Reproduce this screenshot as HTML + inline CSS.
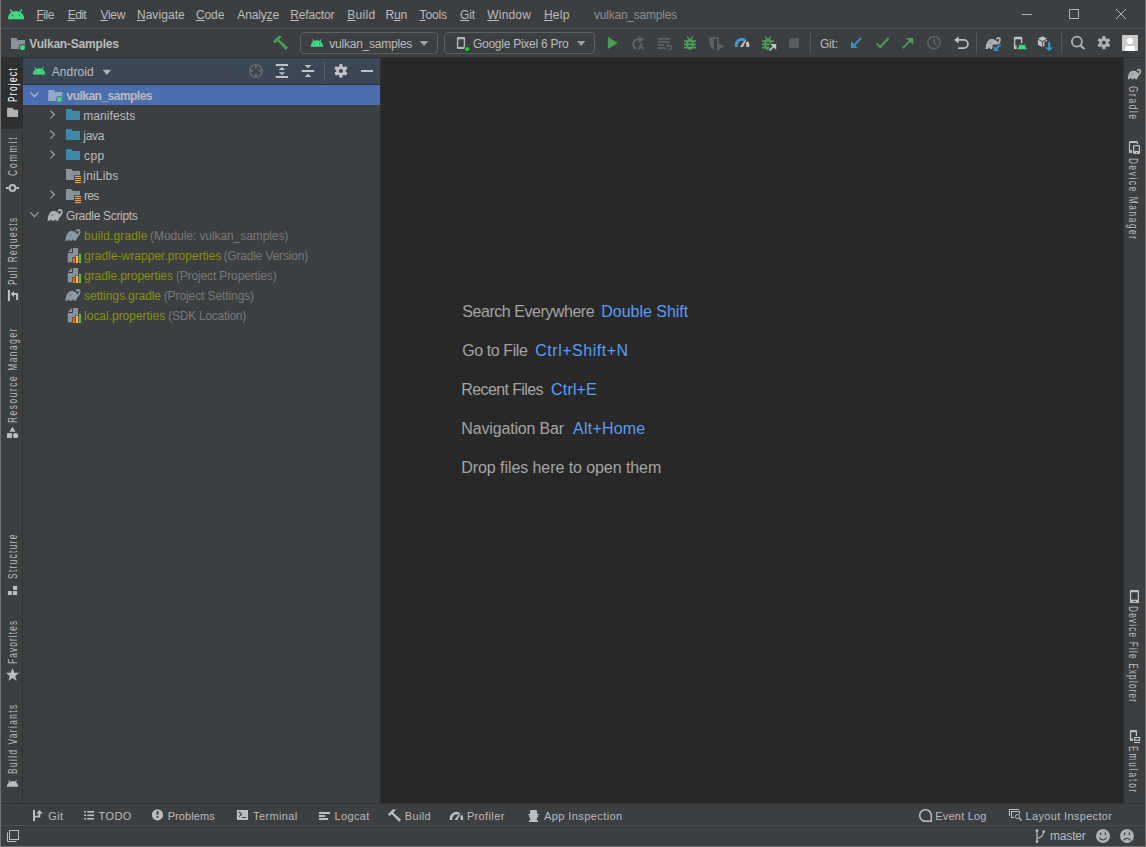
<!DOCTYPE html>
<html lang="en"><head><meta charset="utf-8"><title>vulkan_samples - Android Studio</title>
<style>html,body{margin:0;padding:0;background:#3c3f41;}
body{width:1146px;height:847px;overflow:hidden;position:relative;font-family:"Liberation Sans",sans-serif;font-size:12px;color:#bbbbbb;}
.r{position:absolute;}
.t{position:absolute;white-space:nowrap;line-height:16px;font-size:12px;}
.e{line-height:22px;font-size:16px;}
.s{font-size:11px;}
.vl{transform-origin:0 0;transform:rotate(-90deg) scaleX(0.69);font-size:12px;}
.vr{transform-origin:0 0;transform:rotate(90deg) scaleX(0.69);font-size:12px;}
u{text-decoration:underline;text-underline-offset:1px;text-decoration-thickness:1px;}
svg{position:absolute;left:0;top:0;}
</style></head><body>
<!-- frame regions -->
<div class="r" style="left:0px;top:28px;width:1146px;height:1px;background:#515151;"></div>
<div class="r" style="left:0px;top:57px;width:1146px;height:1px;background:#323232;"></div>
<div class="r" style="left:381px;top:58px;width:742px;height:745px;background:#282828;"></div>
<div class="r" style="left:1123px;top:58px;width:1px;height:745px;background:#323232;"></div>
<div class="r" style="left:380px;top:58px;width:1px;height:745px;background:#323232;"></div>
<div class="r" style="left:23px;top:58px;width:357px;height:26px;background:#3b4754;"></div>
<div class="r" style="left:23px;top:84px;width:357px;height:1px;background:#2f3234;"></div>
<div class="r" style="left:23px;top:85px;width:357px;height:20px;background:#4b6eaf;"></div>
<div class="r" style="left:1px;top:58px;width:22px;height:71px;background:#2d2f30;"></div>
<div class="r" style="left:22px;top:129px;width:1px;height:674px;background:#323232;"></div>
<div class="r" style="left:0px;top:803px;width:1146px;height:1px;background:#323232;"></div>
<div class="r" style="left:0px;top:825px;width:1146px;height:1px;background:#4b4d4f;"></div>
<div class="r" style="left:0px;top:0px;width:1px;height:847px;background:#737373;"></div>
<div class="r" style="left:1145px;top:0px;width:1px;height:847px;background:#6f6f6f;"></div>
<div class="r" style="left:0px;top:846px;width:1146px;height:1px;background:#6f6f6f;"></div>
<div class="r" style="left:300px;top:32px;width:136px;height:20px;border:1px solid #5e6060;border-radius:4px;"></div>
<div class="r" style="left:444px;top:32px;width:149px;height:20px;border:1px solid #5e6060;border-radius:4px;"></div>
<!-- text -->
<span id="m_file" class="t" style="left:36.50px;top:6.84px;letter-spacing:-0.471px;"><u>F</u>ile</span>
<span id="m_edit" class="t" style="left:67.70px;top:6.84px;letter-spacing:-0.564px;"><u>E</u>dit</span>
<span id="m_view" class="t" style="left:100.50px;top:6.84px;letter-spacing:-0.297px;"><u>V</u>iew</span>
<span id="m_nav" class="t" style="left:136.90px;top:6.84px;letter-spacing:0.068px;"><u>N</u>avigate</span>
<span id="m_code" class="t" style="left:195.90px;top:6.84px;letter-spacing:-0.071px;"><u>C</u>ode</span>
<span id="m_ana" class="t" style="left:237.30px;top:6.84px;letter-spacing:-0.152px;">Analy<u>z</u>e</span>
<span id="m_ref" class="t" style="left:290.30px;top:6.84px;letter-spacing:-0.176px;"><u>R</u>efactor</span>
<span id="m_build" class="t" style="left:347.30px;top:6.84px;letter-spacing:0.300px;"><u>B</u>uild</span>
<span id="m_run" class="t" style="left:385.50px;top:6.84px;letter-spacing:-0.200px;">R<u>u</u>n</span>
<span id="m_tools" class="t" style="left:419.50px;top:6.84px;letter-spacing:-0.125px;"><u>T</u>ools</span>
<span id="m_git" class="t" style="left:460.10px;top:6.84px;letter-spacing:-0.150px;"><u>G</u>it</span>
<span id="m_win" class="t" style="left:487.30px;top:6.84px;letter-spacing:0.180px;"><u>W</u>indow</span>
<span id="m_help" class="t" style="left:543.90px;top:6.84px;letter-spacing:0.300px;"><u>H</u>elp</span>
<span id="title" class="t" style="left:594.10px;top:6.84px;letter-spacing:-0.235px;color:#8e8e8e;">vulkan_samples</span>
<span id="crumb" class="t" style="left:29.30px;top:35.84px;letter-spacing:-0.199px;font-weight:bold;">Vulkan-Samples</span>
<span id="cb1" class="t" style="left:329.30px;top:35.84px;letter-spacing:-0.231px;">vulkan_samples</span>
<span id="cb2" class="t" style="left:472.90px;top:35.84px;letter-spacing:-0.250px;">Google Pixel 6 Pro</span>
<span id="gitlbl" class="t" style="left:819.90px;top:35.84px;letter-spacing:-0.169px;">Git:</span>
<span id="ph" class="t" style="left:51.70px;top:63.84px;letter-spacing:0.123px;">Android</span>
<span id="t0" class="t" style="left:66.50px;top:87.84px;letter-spacing:-0.517px;font-weight:bold;">vulkan_samples</span>
<span id="t1" class="t" style="left:83.30px;top:107.84px;letter-spacing:0.078px;">manifests</span>
<span id="t2" class="t" style="left:83.30px;top:127.84px;letter-spacing:-0.293px;">java</span>
<span id="t3" class="t" style="left:83.90px;top:147.84px;letter-spacing:0.500px;">cpp</span>
<span id="t4" class="t" style="left:83.30px;top:167.84px;letter-spacing:0.164px;">jniLibs</span>
<span id="t5" class="t" style="left:84.10px;top:187.84px;letter-spacing:-0.750px;">res</span>
<span id="t6" class="t" style="left:65.90px;top:207.84px;letter-spacing:-0.315px;">Gradle Scripts</span>
<span id="t7a" class="t" style="left:84.10px;top:227.84px;letter-spacing:0.119px;color:#88900c;">build.gradle</span>
<span id="t7b" class="t" style="left:150.10px;top:227.84px;letter-spacing:-0.079px;color:#787878;">(Module: vulkan_samples)</span>
<span id="t8a" class="t" style="left:84.10px;top:247.84px;letter-spacing:0.024px;color:#88900c;">gradle-wrapper.properties</span>
<span id="t8b" class="t" style="left:223.50px;top:247.84px;letter-spacing:-0.174px;color:#787878;">(Gradle Version)</span>
<span id="t9a" class="t" style="left:84.10px;top:267.84px;letter-spacing:-0.074px;color:#88900c;">gradle.properties</span>
<span id="t9b" class="t" style="left:175.90px;top:267.84px;letter-spacing:-0.134px;color:#787878;">(Project Properties)</span>
<span id="t10a" class="t" style="left:84.10px;top:287.84px;letter-spacing:-0.080px;color:#88900c;">settings.gradle</span>
<span id="t10b" class="t" style="left:163.70px;top:287.84px;letter-spacing:-0.095px;color:#787878;">(Project Settings)</span>
<span id="t11a" class="t" style="left:84.10px;top:307.84px;letter-spacing:-0.021px;color:#88900c;">local.properties</span>
<span id="t11b" class="t" style="left:168.30px;top:307.84px;letter-spacing:-0.267px;color:#787878;">(SDK Location)</span>
<span id="e1a" class="t e" style="left:462.30px;top:301.46px;letter-spacing:-0.458px;color:#a4a4a4;">Search Everywhere</span>
<span id="e1b" class="t e" style="left:601.30px;top:301.46px;letter-spacing:-0.030px;color:#589df6;">Double Shift</span>
<span id="e2a" class="t e" style="left:462.30px;top:340.46px;letter-spacing:-0.429px;color:#a4a4a4;">Go to File</span>
<span id="e2b" class="t e" style="left:535.30px;top:340.46px;letter-spacing:0.516px;color:#589df6;">Ctrl+Shift+N</span>
<span id="e3a" class="t e" style="left:461.30px;top:379.46px;letter-spacing:-0.610px;color:#a4a4a4;">Recent Files</span>
<span id="e3b" class="t e" style="left:551.10px;top:379.46px;letter-spacing:0.160px;color:#589df6;">Ctrl+E</span>
<span id="e4a" class="t e" style="left:461.30px;top:418.46px;letter-spacing:-0.159px;color:#a4a4a4;">Navigation Bar</span>
<span id="e4b" class="t e" style="left:573.10px;top:418.46px;letter-spacing:0.210px;color:#589df6;">Alt+Home</span>
<span id="e5a" class="t e" style="left:461.30px;top:457.46px;letter-spacing:-0.072px;color:#a4a4a4;">Drop files here to open them</span>
<span id="b_git" class="t s" style="left:48.30px;top:808.19px;letter-spacing:0.300px;">Git</span>
<span id="b_todo" class="t s" style="left:98.50px;top:808.19px;letter-spacing:0.405px;">TODO</span>
<span id="b_prob" class="t s" style="left:167.70px;top:808.19px;letter-spacing:0.091px;">Problems</span>
<span id="b_term" class="t s" style="left:253.10px;top:808.19px;letter-spacing:0.355px;">Terminal</span>
<span id="b_log" class="t s" style="left:334.50px;top:808.19px;letter-spacing:0.380px;">Logcat</span>
<span id="b_build" class="t s" style="left:404.70px;top:808.19px;letter-spacing:0.375px;">Build</span>
<span id="b_prof" class="t s" style="left:466.90px;top:808.19px;letter-spacing:0.367px;">Profiler</span>
<span id="b_app" class="t s" style="left:543.90px;top:808.19px;letter-spacing:0.426px;">App Inspection</span>
<span id="b_ev" class="t s" style="left:935.30px;top:808.19px;letter-spacing:0.204px;">Event Log</span>
<span id="b_li" class="t s" style="left:1025.50px;top:808.19px;letter-spacing:0.342px;">Layout Inspector</span>
<span id="s_master" class="t" style="left:1049.90px;top:827.84px;letter-spacing:-0.140px;">master</span>
<span id="l_proj" class="t vl" style="left:5.04px;top:102.30px;letter-spacing:1.881px;color:#ffffff;">Project</span>
<span id="l_commit" class="t vl" style="left:5.04px;top:176.30px;letter-spacing:2.928px;">Commit</span>
<span id="l_pr" class="t vl" style="left:5.04px;top:285.30px;letter-spacing:1.933px;">Pull Requests</span>
<span id="l_rm" class="t vl" style="left:5.04px;top:422.50px;letter-spacing:2.319px;">Resource Manager</span>
<span id="l_struct" class="t vl" style="left:5.04px;top:579.10px;letter-spacing:1.960px;">Structure</span>
<span id="l_fav" class="t vl" style="left:5.04px;top:663.70px;letter-spacing:1.630px;">Favorites</span>
<span id="l_bv" class="t vl" style="left:5.04px;top:774.30px;letter-spacing:2.093px;">Build Variants</span>
<span id="r_gradle" class="t vr" style="left:1141.16px;top:86.10px;letter-spacing:2.406px;">Gradle</span>
<span id="r_dm" class="t vr" style="left:1141.16px;top:158.10px;letter-spacing:2.316px;">Device Manager</span>
<span id="r_dfe" class="t vr" style="left:1141.16px;top:606.10px;letter-spacing:1.678px;">Device File Explorer</span>
<span id="r_emu" class="t vr" style="left:1141.16px;top:746.30px;letter-spacing:2.779px;">Emulator</span>
<!-- icons -->
<svg width="1146" height="847" viewBox="0 0 1146 847">
<g transform="translate(7.90,9.40) scale(1.0062)"><path d="M0,9.8 A8.1,8.3 0 0 1 16.2,9.8 Z" fill="#3ddc84"/><path d="M2.7,0.5 L4.6,3.6 M13.5,0.5 L11.6,3.6" stroke="#3ddc84" stroke-width="1.3" stroke-linecap="round" fill="none"/><circle cx="4.6" cy="6.1" r="0.7" fill="#3c3f41"/><circle cx="11.6" cy="6.1" r="0.7" fill="#3c3f41"/></g>
<path d="M1022,14.5 L1032,14.5" stroke="#b0b2b4" stroke-width="1" stroke-linecap="butt" fill="none"/>
<rect x="1069.5" y="9.5" width="9" height="9" fill="none" stroke="#b0b2b4" stroke-width="1"/>
<path d="M1116,9 L1126,19 M1126,9 L1116,19" fill="none" stroke="#b0b2b4" stroke-width="1" stroke-linecap="butt" stroke-linejoin="miter"/>
<path d="M11,38 h5.2 l1.8,2 h7 v9 h-14 Z" fill="#87939a"/>
<circle cx="22.5" cy="47.5" r="3.5" fill="#3c3f41"/><circle cx="22.5" cy="47.5" r="2.6" fill="#3ddc84"/>
<polygon points="272.90,41.50 278.40,35.90 282.20,36.00 279.20,39.50 288.10,47.50 285.70,50.00 277.40,41.10 275.30,43.40" fill="#499c54"/>
<g transform="translate(310.60,39.20) scale(0.7778)"><path d="M0,9.8 A8.1,8.3 0 0 1 16.2,9.8 Z" fill="#3ddc84"/><path d="M2.7,0.5 L4.6,3.6 M13.5,0.5 L11.6,3.6" stroke="#3ddc84" stroke-width="1.3" stroke-linecap="round" fill="none"/><circle cx="4.6" cy="6.1" r="0.7" fill="#3c3f41"/><circle cx="11.6" cy="6.1" r="0.7" fill="#3c3f41"/></g>
<polygon points="419.7,41 428.4,41 424.05,46" fill="#9da0a2"/>
<rect x="456.9" y="37" width="8.2" height="12" fill="#a9b7c4" rx="1.2" />
<rect x="458.3" y="39.3" width="5.4" height="7.6" fill="#3c3f41" />
<circle cx="467.1" cy="49.1" r="2.8" fill="#3c3f41"/><circle cx="467.1" cy="49.1" r="2.1" fill="#00e400"/>
<polygon points="577,41 585.4,41 581.2,46" fill="#9da0a2"/>
<polygon points="607.9,36.8 607.9,49 617.7,42.9" fill="#499c54"/>
<path d="M639.2,39.7 A4,4 0 1 0 636.4,48.7" fill="none" stroke="#5f6163" stroke-width="2" stroke-linecap="butt" stroke-linejoin="miter"/>
<polygon points="638.6,36 643.9,39.7 638.6,43" fill="#5f6163"/>
<path d="M638.5,49.8 L641.05,44.3 L643.6,49.8 M639.5,48 H642.6" fill="none" stroke="#5f6163" stroke-width="1.5" stroke-linecap="butt" stroke-linejoin="miter"/>
<rect x="658" y="38.1" width="11.9" height="1.7" fill="#5f6163" />
<rect x="658" y="41.2" width="11.9" height="1.7" fill="#5f6163" />
<rect x="658" y="44.2" width="6" height="1.7" fill="#5f6163" />
<rect x="658" y="47.2" width="7.9" height="1.7" fill="#5f6163" />
<path d="M667.6,45.6 H669.6 A2,2 0 0 1 669.6,49.6 H668.6" fill="none" stroke="#5f6163" stroke-width="1.1" stroke-linecap="butt" stroke-linejoin="miter"/>
<polygon points="666,45.6 668.4,43.8 668.4,47.4" fill="#5f6163"/>
<g fill="#499c54" stroke="#499c54">
<ellipse cx="690" cy="44.3" rx="4" ry="5.7" stroke="none"/>
<path d="M687.1,36.3 L689,39.2 M692.9,36.3 L691,39.2" stroke-width="1.3" fill="none"/>
<path d="M684,41.1 H696" stroke-width="1.7" fill="none"/>
<path d="M684,44.4 H696" stroke-width="1.7" fill="none"/>
<path d="M684,47.6 H696" stroke-width="1.7" fill="none"/>
</g>
<path d="M688.3,42.6 H691.7 M688.3,45.9 H691.7" stroke="#3c3f41" stroke-width="1.1" fill="none"/>
<path d="M709.2,37.6 L714,36.8 L718.7,37.6 V42.5 H717 V39 L714,38.4 V49 C711,47.5 709.2,45 709.2,42 Z" fill="#5f6163"/>
<polygon points="717,42 717,50.8 723.9,46.4" fill="#5f6163"/>
<clipPath id="cg1"><rect x="733.7" y="36.900000000000006" width="16.6" height="10.00"/></clipPath><g clip-path="url(#cg1)">
<path d="M736.55,47.18 A5.80,5.80 0 0 1 744.54,39.99" stroke="#3a9bd5" stroke-width="3.00" fill="none"/>
<path d="M746.86,42.04 A5.80,5.80 0 0 1 747.45,47.18" stroke="#c4c6c8" stroke-width="3.00" fill="none"/>
<polygon points="739.90,46.90 742.90,46.90 746.38,39.82 745.58,39.22" fill="#c4c6c8"/>
</g>
<clipPath id="cpb"><path d="M760,34 H777 V43.2 H769.2 V52 H760 Z"/></clipPath><g clip-path="url(#cpb)">
<g fill="#499c54" stroke="#499c54">
<ellipse cx="768" cy="44.3" rx="4" ry="5.7" stroke="none"/>
<path d="M765.1,36.3 L767,39.2 M770.9,36.3 L769,39.2" stroke-width="1.3" fill="none"/>
<path d="M762,41.1 H774" stroke-width="1.7" fill="none"/>
<path d="M762,44.4 H774" stroke-width="1.7" fill="none"/>
<path d="M762,47.6 H774" stroke-width="1.7" fill="none"/>
</g>
<path d="M766.3,42.6 H769.7 M766.3,45.9 H769.7" stroke="#3c3f41" stroke-width="1.1" fill="none"/>
</g>
<polygon points="770.4,43.9 776.2,43.9 776.2,49.8" fill="#c0c2c4"/>
<path d="M769.6,50.3 L774.2,45.8" stroke="#c0c2c4" stroke-width="1.8" stroke-linecap="butt" fill="none"/>
<rect x="789.1" y="38.1" width="9.8" height="9.8" fill="#5a5c5e" />
<rect x="810" y="33" width="1" height="20" fill="#55585a" />
<rect x="976" y="33" width="1" height="20" fill="#55585a" />
<rect x="1061" y="33" width="1" height="20" fill="#55585a" />
<path d="M861.2,37.9 L854.5,44.9" stroke="#3592c4" stroke-width="1.8" stroke-linecap="butt" fill="none"/>
<polygon points="851,41.1 851,48 857.9,48" fill="#3592c4"/>
<path d="M876.6,43.4 L880.3,47 L888.6,38.2" fill="none" stroke="#499c54" stroke-width="2" stroke-linecap="butt" stroke-linejoin="miter"/>
<path d="M902.6,48.2 L910.2,40.6" stroke="#499c54" stroke-width="1.8" stroke-linecap="butt" fill="none"/>
<polygon points="906,38 913.2,38 913.2,45" fill="#499c54"/>
<circle cx="934" cy="42.6" r="6.1" fill="none" stroke="#5f6163" stroke-width="1.6"/>
<path d="M934,38.8 V42.8 L936.7,44.6" fill="none" stroke="#5f6163" stroke-width="1.5" stroke-linecap="butt" stroke-linejoin="miter"/>
<path d="M957.5,39.9 H963.8 A4.1,4.1 0 0 1 963.8,48.1 H958.2" fill="none" stroke="#c0c2c4" stroke-width="1.7" stroke-linecap="butt" stroke-linejoin="miter"/>
<polygon points="954.2,39.9 958.6,36.3 958.6,43.6" fill="#c0c2c4"/>
<g transform="translate(985.60,37.10) scale(1.0066)"><path d="M0.1,11.7 C0.2,9 0.5,7 1.1,5.9 C1.8,4.6 2.6,3.5 3.5,2.7 C4.2,2.2 4.8,2 5.5,2 C6.5,2 7.2,2.1 7.9,2.2 C8.8,2.4 9.4,2.7 10,3.1 C10.8,3.5 11.3,4 11.8,4.6 L12.8,6.6 L11.3,9.6 L10.6,11.7 H8.3 a0.85,1.25 0 0 0 -1.7,0 H4.1 a0.85,1.25 0 0 0 -1.7,0 Z" fill="#afb1b3"/><path d="M11.4,7.6 C12.9,6.4 14.2,4.6 14.25,3 C14.3,1.4 13.6,0.8 12.7,0.8 C12,0.8 11.5,1.1 11.2,1.5" stroke="#afb1b3" stroke-width="1.8" stroke-linecap="round" fill="none"/><path d="M3.5,5.9 C4.3,6.6 5.6,6.2 6.3,5.1" stroke="#3c3f41" stroke-width="0.7" fill="none" opacity="0.75"/></g>
<rect x="992.6" y="44.6" width="9" height="7" fill="#3c3f41" />
<polygon points="993.8,45.7 993.8,50.9 999.4,50.9" fill="#3592c4"/>
<path d="M995.8,49 L1000.6,44.8" stroke="#3592c4" stroke-width="1.7" stroke-linecap="butt" fill="none"/>
<rect x="1013.9" y="36.8" width="8.4" height="12.4" fill="#c0c2c4" rx="1.2" />
<rect x="1015.3" y="39.3" width="5.6" height="6.3" fill="#3c3f41" />
<path d="M1016.6,50.6 V46 C1018,43 1025.5,42 1027.4,46 V50.6 Z" fill="#3c3f41"/>
<g transform="translate(1017.70,44.00) scale(0.5432)"><path d="M0,9.8 A8.1,8.3 0 0 1 16.2,9.8 Z" fill="#3ddc84"/><path d="M2.7,0.5 L4.6,3.6 M13.5,0.5 L11.6,3.6" stroke="#3ddc84" stroke-width="1.3" stroke-linecap="round" fill="none"/></g>
<polygon points="1042.5,36.3 1047,38.8 1042.5,41.3 1037.9,38.8" fill="#c0c2c4"/>
<polygon points="1037.9,39.7 1042.1,42 1042.1,47 1037.9,44.7" fill="#c0c2c4"/>
<polygon points="1047,39.7 1042.9,42 1042.9,47 1047,44.7" fill="#c0c2c4"/>
<rect x="1044.4" y="41.5" width="9.4" height="10.2" fill="#3c3f41" />
<rect x="1048.2" y="42" width="2" height="6" fill="#3a9bd5" />
<polygon points="1045.2,47.4 1052.9,47.4 1049.2,51.1" fill="#3a9bd5"/>
<circle cx="1076.9" cy="41.7" r="5" fill="none" stroke="#afb1b3" stroke-width="1.8"/>
<path d="M1080.6,45.4 L1084.4,49" stroke="#afb1b3" stroke-width="2.1" stroke-linecap="butt" fill="none"/>
<g transform="translate(1103.9,42.7)"><circle r="4.62" fill="#afb1b3"/><rect x="-1.65" y="-6.60" width="3.30" height="3.96" rx="1.06" fill="#afb1b3" transform="rotate(0)"/><rect x="-1.65" y="-6.60" width="3.30" height="3.96" rx="1.06" fill="#afb1b3" transform="rotate(60)"/><rect x="-1.65" y="-6.60" width="3.30" height="3.96" rx="1.06" fill="#afb1b3" transform="rotate(120)"/><rect x="-1.65" y="-6.60" width="3.30" height="3.96" rx="1.06" fill="#afb1b3" transform="rotate(180)"/><rect x="-1.65" y="-6.60" width="3.30" height="3.96" rx="1.06" fill="#afb1b3" transform="rotate(240)"/><rect x="-1.65" y="-6.60" width="3.30" height="3.96" rx="1.06" fill="#afb1b3" transform="rotate(300)"/><circle r="1.91" fill="#3c3f41"/></g>
<rect x="1122" y="35" width="16" height="16" fill="#c9c9c9" />
<circle cx="1130" cy="40.9" r="3.1" fill="#fff"/><path d="M1125,51 V47.5 Q1125,46 1126.5,46 H1133.5 Q1135,46 1135,47.5 V51 Z" fill="#fff"/>
<g transform="translate(32.90,67.10) scale(0.7654)"><path d="M0,9.8 A8.1,8.3 0 0 1 16.2,9.8 Z" fill="#3ddc84"/><path d="M2.7,0.5 L4.6,3.6 M13.5,0.5 L11.6,3.6" stroke="#3ddc84" stroke-width="1.3" stroke-linecap="round" fill="none"/><circle cx="4.6" cy="6.1" r="0.7" fill="#3c3f41"/><circle cx="11.6" cy="6.1" r="0.7" fill="#3c3f41"/></g>
<polygon points="102.5,69.8 111.2,69.8 106.85,75" fill="#afb1b3"/>
<circle cx="255.9" cy="70.9" r="6.2" fill="none" stroke="#6b6a68" stroke-width="1.6"/>
<path d="M255.9,64.6 V68.4 M255.9,73.4 V77.2 M249.6,70.9 H253.4 M258.4,70.9 H262.2" fill="none" stroke="#6b6a68" stroke-width="1.6" stroke-linecap="butt" stroke-linejoin="miter"/>
<rect x="275.8" y="64" width="12.3" height="2" fill="#c0c2c4" />
<rect x="275.8" y="76" width="12.3" height="2" fill="#c0c2c4" />
<polygon points="282,67 285.3,70 278.7,70" fill="#c0c2c4"/>
<polygon points="278.7,72.2 285.3,72.2 282,75" fill="#c0c2c4"/>
<rect x="301.7" y="70" width="12.5" height="2" fill="#c0c2c4" />
<polygon points="304.7,65 311.3,65 308,68.3" fill="#c0c2c4"/>
<polygon points="308,73.8 311.3,77.1 304.7,77.1" fill="#c0c2c4"/>
<rect x="324" y="61" width="1" height="20" fill="#575c62" />
<g transform="translate(340.9,70.9)"><circle r="4.76" fill="#c0c2c4"/><rect x="-1.70" y="-6.80" width="3.40" height="4.08" rx="1.09" fill="#c0c2c4" transform="rotate(0)"/><rect x="-1.70" y="-6.80" width="3.40" height="4.08" rx="1.09" fill="#c0c2c4" transform="rotate(60)"/><rect x="-1.70" y="-6.80" width="3.40" height="4.08" rx="1.09" fill="#c0c2c4" transform="rotate(120)"/><rect x="-1.70" y="-6.80" width="3.40" height="4.08" rx="1.09" fill="#c0c2c4" transform="rotate(180)"/><rect x="-1.70" y="-6.80" width="3.40" height="4.08" rx="1.09" fill="#c0c2c4" transform="rotate(240)"/><rect x="-1.70" y="-6.80" width="3.40" height="4.08" rx="1.09" fill="#c0c2c4" transform="rotate(300)"/><circle r="1.97" fill="#3b4754"/></g>
<rect x="361" y="70" width="12" height="2" fill="#c0c2c4" />
<path d="M30.5,92.39999999999999 L34.5,96.6 L38.5,92.39999999999999" fill="none" stroke="#b5bfd3" stroke-width="1.2" stroke-linecap="butt" stroke-linejoin="miter"/>
<path d="M48.2,90 h5.2 l1.8,2 h7 v9 h-14 Z" fill="#9aa7c4"/>
<circle cx="59.3" cy="99.3" r="3.4" fill="#4b6eaf"/><circle cx="59.3" cy="99.3" r="2.5" fill="#3ddc84"/>
<path d="M50.199999999999996,110.6 L54.4,114.6 L50.199999999999996,118.6" fill="none" stroke="#a2a5a7" stroke-width="1.2" stroke-linecap="butt" stroke-linejoin="miter"/>
<path d="M66,109 h5.2 l1.8,2 h7 v9 h-14 Z" fill="#3f88a8"/>
<path d="M50.199999999999996,130.6 L54.4,134.6 L50.199999999999996,138.6" fill="none" stroke="#a2a5a7" stroke-width="1.2" stroke-linecap="butt" stroke-linejoin="miter"/>
<path d="M66,129 h5.2 l1.8,2 h7 v9 h-14 Z" fill="#3f88a8"/>
<path d="M50.199999999999996,150.6 L54.4,154.6 L50.199999999999996,158.6" fill="none" stroke="#a2a5a7" stroke-width="1.2" stroke-linecap="butt" stroke-linejoin="miter"/>
<path d="M66,149 h5.2 l1.8,2 h7 v9 h-14 Z" fill="#3f88a8"/>
<path d="M66,169 h5.2 l1.8,2 h7 v9 h-14 Z" fill="#87939a"/>
<rect x="74" y="175.1" width="8" height="5.5" fill="#3c3f41" />
<rect x="74.9" y="175.9" width="6.2" height="1.15" fill="#e8a33d" />
<rect x="74.9" y="177.93" width="6.2" height="1.15" fill="#e8a33d" />
<rect x="74.9" y="179.96" width="6.2" height="1.15" fill="#e8a33d" />
<rect x="74.9" y="181.99" width="6.2" height="1.15" fill="#e8a33d" />
<path d="M50.199999999999996,190.6 L54.4,194.6 L50.199999999999996,198.6" fill="none" stroke="#a2a5a7" stroke-width="1.2" stroke-linecap="butt" stroke-linejoin="miter"/>
<path d="M66,189 h5.2 l1.8,2 h7 v9 h-14 Z" fill="#87939a"/>
<rect x="74" y="195.1" width="8" height="5.5" fill="#3c3f41" />
<rect x="74.9" y="195.9" width="6.2" height="1.15" fill="#e8a33d" />
<rect x="74.9" y="197.93" width="6.2" height="1.15" fill="#e8a33d" />
<rect x="74.9" y="199.96" width="6.2" height="1.15" fill="#e8a33d" />
<rect x="74.9" y="201.99" width="6.2" height="1.15" fill="#e8a33d" />
<path d="M30.5,212.4 L34.5,216.6 L38.5,212.4" fill="none" stroke="#a2a5a7" stroke-width="1.2" stroke-linecap="butt" stroke-linejoin="miter"/>
<g transform="translate(47.50,209.10) scale(1.0000)"><path d="M0.1,11.7 C0.2,9 0.5,7 1.1,5.9 C1.8,4.6 2.6,3.5 3.5,2.7 C4.2,2.2 4.8,2 5.5,2 C6.5,2 7.2,2.1 7.9,2.2 C8.8,2.4 9.4,2.7 10,3.1 C10.8,3.5 11.3,4 11.8,4.6 L12.8,6.6 L11.3,9.6 L10.6,11.7 H8.3 a0.85,1.25 0 0 0 -1.7,0 H4.1 a0.85,1.25 0 0 0 -1.7,0 Z" fill="#afb1b3"/><path d="M11.4,7.6 C12.9,6.4 14.2,4.6 14.25,3 C14.3,1.4 13.6,0.8 12.7,0.8 C12,0.8 11.5,1.1 11.2,1.5" stroke="#afb1b3" stroke-width="1.8" stroke-linecap="round" fill="none"/><path d="M3.5,5.9 C4.3,6.6 5.6,6.2 6.3,5.1" stroke="#3c3f41" stroke-width="0.7" fill="none" opacity="0.75"/></g>
<g transform="translate(65.50,229.10) scale(0.9934)"><path d="M0.1,11.7 C0.2,9 0.5,7 1.1,5.9 C1.8,4.6 2.6,3.5 3.5,2.7 C4.2,2.2 4.8,2 5.5,2 C6.5,2 7.2,2.1 7.9,2.2 C8.8,2.4 9.4,2.7 10,3.1 C10.8,3.5 11.3,4 11.8,4.6 L12.8,6.6 L11.3,9.6 L10.6,11.7 H8.3 a0.85,1.25 0 0 0 -1.7,0 H4.1 a0.85,1.25 0 0 0 -1.7,0 Z" fill="#8a99a3"/><path d="M11.4,7.6 C12.9,6.4 14.2,4.6 14.25,3 C14.3,1.4 13.6,0.8 12.7,0.8 C12,0.8 11.5,1.1 11.2,1.5" stroke="#8a99a3" stroke-width="1.8" stroke-linecap="round" fill="none"/><path d="M3.5,5.9 C4.3,6.6 5.6,6.2 6.3,5.1" stroke="#3c3f41" stroke-width="0.7" fill="none" opacity="0.75"/></g>
<g transform="translate(65.50,289.10) scale(0.9934)"><path d="M0.1,11.7 C0.2,9 0.5,7 1.1,5.9 C1.8,4.6 2.6,3.5 3.5,2.7 C4.2,2.2 4.8,2 5.5,2 C6.5,2 7.2,2.1 7.9,2.2 C8.8,2.4 9.4,2.7 10,3.1 C10.8,3.5 11.3,4 11.8,4.6 L12.8,6.6 L11.3,9.6 L10.6,11.7 H8.3 a0.85,1.25 0 0 0 -1.7,0 H4.1 a0.85,1.25 0 0 0 -1.7,0 Z" fill="#8a99a3"/><path d="M11.4,7.6 C12.9,6.4 14.2,4.6 14.25,3 C14.3,1.4 13.6,0.8 12.7,0.8 C12,0.8 11.5,1.1 11.2,1.5" stroke="#8a99a3" stroke-width="1.8" stroke-linecap="round" fill="none"/><path d="M3.5,5.9 C4.3,6.6 5.6,6.2 6.3,5.1" stroke="#3c3f41" stroke-width="0.7" fill="none" opacity="0.75"/></g>
<path d="M73,247.9 H78.2 V262.2 H67.8 V252.9 H73 Z" fill="#87939a"/>
<polygon points="67.8,251.9 72,247.9 72,251.9" fill="#87939a"/>
<rect x="72.2" y="257.2" width="9.5" height="6" fill="#3c3f41" />
<rect x="75.4" y="255.20000000000002" width="6.3" height="3" fill="#3c3f41" />
<rect x="78.4" y="253.20000000000002" width="3.3" height="3" fill="#3c3f41" />
<rect x="72.8" y="257.8" width="2.3" height="5.3" fill="#f26522" />
<rect x="75.9" y="255.8" width="2.3" height="7.3" fill="#fdb93f" />
<rect x="78.9" y="253.8" width="2.2" height="9.3" fill="#62b543" />
<path d="M73,267.9 H78.2 V282.2 H67.8 V272.9 H73 Z" fill="#87939a"/>
<polygon points="67.8,271.9 72,267.9 72,271.9" fill="#87939a"/>
<rect x="72.2" y="277.2" width="9.5" height="6" fill="#3c3f41" />
<rect x="75.4" y="275.2" width="6.3" height="3" fill="#3c3f41" />
<rect x="78.4" y="273.2" width="3.3" height="3" fill="#3c3f41" />
<rect x="72.8" y="277.79999999999995" width="2.3" height="5.3" fill="#f26522" />
<rect x="75.9" y="275.79999999999995" width="2.3" height="7.3" fill="#fdb93f" />
<rect x="78.9" y="273.79999999999995" width="2.2" height="9.3" fill="#62b543" />
<path d="M73,307.9 H78.2 V322.2 H67.8 V312.9 H73 Z" fill="#87939a"/>
<polygon points="67.8,311.9 72,307.9 72,311.9" fill="#87939a"/>
<rect x="72.2" y="317.2" width="9.5" height="6" fill="#3c3f41" />
<rect x="75.4" y="315.2" width="6.3" height="3" fill="#3c3f41" />
<rect x="78.4" y="313.2" width="3.3" height="3" fill="#3c3f41" />
<rect x="72.8" y="317.79999999999995" width="2.3" height="5.3" fill="#f26522" />
<rect x="75.9" y="315.79999999999995" width="2.3" height="7.3" fill="#fdb93f" />
<rect x="78.9" y="313.79999999999995" width="2.2" height="9.3" fill="#62b543" />
<path d="M7.1,107.8 h5.2 l1.8,2 h4 v7.300000000000001 h-11 Z" fill="#b0b2b4"/>
<circle cx="12.5" cy="187.9" r="2.9" fill="none" stroke="#bbbdbf" stroke-width="2"/>
<rect x="5.9" y="186.9" width="2.8" height="2.1" fill="#bbbdbf" />
<rect x="16.3" y="186.9" width="2.8" height="2.1" fill="#bbbdbf" />
<rect x="7.9" y="289.9" width="2.1" height="11.1" fill="#bbbdbf" />
<polygon points="10.7,294 14,290.7 14,297.3" fill="#bbbdbf"/>
<path d="M14,294 H17.1 V300" fill="none" stroke="#bbbdbf" stroke-width="2.1" stroke-linecap="butt" stroke-linejoin="miter"/>
<polygon points="12.5,426.8 15.5,431.8 9.5,431.8" fill="#bbbdbf"/>
<rect x="7" y="433.1" width="4.9" height="4.9" fill="#bbbdbf" />
<circle cx="15.6" cy="435.6" r="2.6" fill="#bbbdbf"/>
<rect x="13" y="585.9" width="4.1" height="4" fill="#bbbdbf" />
<rect x="7.9" y="591" width="4" height="4" fill="#bbbdbf" />
<rect x="13" y="591" width="4.1" height="4" fill="#bbbdbf" />
<polygon points="12.5,668.0 14.2,672.65 19.16,672.84 15.26,675.9 16.61,680.66 12.5,677.9 8.39,680.66 9.74,675.9 5.84,672.84 10.8,672.65" fill="#bbbdbf"/>
<g transform="translate(6.85,779.90) scale(0.7037)"><path d="M0,9.8 A8.1,8.3 0 0 1 16.2,9.8 Z" fill="#bbbdbf"/><path d="M2.7,0.5 L4.6,3.6 M13.5,0.5 L11.6,3.6" stroke="#bbbdbf" stroke-width="1.3" stroke-linecap="round" fill="none"/></g>
<g transform="translate(1127.80,68.90) scale(0.8816)"><path d="M0.1,11.7 C0.2,9 0.5,7 1.1,5.9 C1.8,4.6 2.6,3.5 3.5,2.7 C4.2,2.2 4.8,2 5.5,2 C6.5,2 7.2,2.1 7.9,2.2 C8.8,2.4 9.4,2.7 10,3.1 C10.8,3.5 11.3,4 11.8,4.6 L12.8,6.6 L11.3,9.6 L10.6,11.7 H8.3 a0.85,1.25 0 0 0 -1.7,0 H4.1 a0.85,1.25 0 0 0 -1.7,0 Z" fill="#afb1b3"/><path d="M11.4,7.6 C12.9,6.4 14.2,4.6 14.25,3 C14.3,1.4 13.6,0.8 12.7,0.8 C12,0.8 11.5,1.1 11.2,1.5" stroke="#afb1b3" stroke-width="1.8" stroke-linecap="round" fill="none"/><path d="M3.5,5.9 C4.3,6.6 5.6,6.2 6.3,5.1" stroke="#3c3f41" stroke-width="0.7" fill="none" opacity="0.75"/></g>
<rect x="1129.5" y="141.7" width="8" height="10.7" rx="1.2" fill="none" stroke="#bbbdbf" stroke-width="1.2"/>
<rect x="1129" y="150.2" width="4.5" height="2.8" fill="#bbbdbf" />
<rect x="1129.6" y="141.1" width="7.8" height="1.9" fill="#bbbdbf" rx="0.9" />
<rect x="1132.2" y="144.2" width="8.6" height="10.6" fill="#3c3f41" />
<rect x="1133" y="145" width="7.05" height="9.05" fill="#bbbdbf" rx="1.2" />
<rect x="1134.3" y="146.3" width="4.5" height="4.6" fill="#3c3f41" />
<circle cx="1136.5" cy="152.5" r="0.55" fill="#3c3f41"/>
<rect x="1129.9" y="590" width="9.1" height="13.1" fill="#bbbdbf" rx="0.9" />
<rect x="1131.2" y="592.2" width="6.5" height="7.5" fill="#3c3f41" />
<rect x="1133" y="601" width="2.9" height="0.9" fill="#3c3f41" />
<rect x="1129.9" y="730" width="7.15" height="11" fill="#bbbdbf" rx="0.8" />
<rect x="1131.2" y="732.2" width="4.6" height="6.3" fill="#3c3f41" />
<rect x="1133.1" y="736" width="8" height="8" fill="#3c3f41" />
<rect x="1134.55" y="737.5" width="5.05" height="2.9" fill="none" stroke="#bbbdbf" stroke-width="1.2"/>
<rect x="1133.95" y="742" width="6.25" height="1.1" fill="#bbbdbf" />
<rect x="33" y="810" width="2" height="11" fill="#bbbdbf" />
<path d="M35,816.6 H39.3 V812.5" fill="none" stroke="#bbbdbf" stroke-width="1.9" stroke-linecap="butt" stroke-linejoin="miter"/>
<polygon points="36,813.6 39.3,810 42.8,813.6" fill="#bbbdbf"/>
<rect x="84.1" y="811" width="2" height="1.6" fill="#bbbdbf" />
<rect x="87.4" y="811" width="6.7" height="1.6" fill="#bbbdbf" />
<rect x="84.1" y="814.5" width="2" height="1.6" fill="#bbbdbf" />
<rect x="87.4" y="814.5" width="6.7" height="1.6" fill="#bbbdbf" />
<rect x="84.1" y="818" width="2" height="1.6" fill="#bbbdbf" />
<rect x="87.4" y="818" width="6.7" height="1.6" fill="#bbbdbf" />
<circle cx="157.5" cy="814.8" r="5.6" fill="#bbbdbf"/>
<rect x="156.6" y="811.1" width="1.9" height="3.6" fill="#3c3f41" />
<rect x="156.6" y="816.2" width="1.9" height="1.7" fill="#3c3f41" />
<rect x="236.9" y="810" width="11.1" height="10" fill="#bbbdbf" />
<path d="M239,812 L241.6,814.3 L239,816.6" fill="none" stroke="#3c3f41" stroke-width="1.1" stroke-linecap="butt" stroke-linejoin="miter"/>
<rect x="242.1" y="817" width="3.7" height="1" fill="#3c3f41" />
<rect x="318.9" y="812" width="11.1" height="2" fill="#bbbdbf" />
<rect x="318.9" y="815" width="6.2" height="2" fill="#bbbdbf" />
<rect x="318.9" y="818" width="9.2" height="2" fill="#bbbdbf" />
<polygon points="387.80,814.40 392.61,809.50 395.94,809.59 393.31,812.65 401.10,819.65 399.00,821.84 391.74,814.05 389.90,816.06" fill="#bbbdbf"/>
<clipPath id="cg2"><rect x="448.8" y="810.8" width="15.4" height="9.10"/></clipPath><g clip-path="url(#cg2)">
<path d="M451.38,820.36 A5.45,5.45 0 0 1 458.89,813.60" stroke="#bbbdbf" stroke-width="2.50" fill="none"/>
<path d="M461.07,815.53 A5.45,5.45 0 0 1 461.62,820.36" stroke="#bbbdbf" stroke-width="2.50" fill="none"/>
<polygon points="454.40,819.90 457.40,819.90 460.55,813.59 459.75,812.99" fill="#bbbdbf"/>
</g>
<path d="M530.05,814 V811.3 Q530.05,810.1 531.3,810.1 H535.8 Q537.05,810.1 537.05,811.3 V814 H539.15 V815.05 H537.6 Q538.4,816.2 537.6,817.6 L536.4,819.4 L538.1,820.7 V822.05 H528.9 V820.7 L530.7,819.4 L529.5,817.6 Q528.7,816.2 529.5,815.05 H527.85 V814 Z" fill="#bbbdbf"/>
<path d="M925.5,809.7 a5.8,5.8 0 1 0 0,11.6 H931.3 V815.5 a5.8,5.8 0 0 0 -5.8,-5.8 Z" fill="none" stroke="#bbbdbf" stroke-width="1.5" stroke-linecap="butt" stroke-linejoin="miter"/>
<path d="M1019,809.45 H1009.45 V816.1" fill="none" stroke="#bbbdbf" stroke-width="1.1" stroke-linecap="butt" stroke-linejoin="miter"/>
<path d="M1019.5,814 V811.55 H1011.55 V817.45 H1014" fill="none" stroke="#bbbdbf" stroke-width="1.1" stroke-linecap="butt" stroke-linejoin="miter"/>
<circle cx="1017.45" cy="816.5" r="2.1" fill="none" stroke="#bbbdbf" stroke-width="1"/>
<path d="M1019.1,818.1 L1021.6,820.5" stroke="#bbbdbf" stroke-width="1.4" stroke-linecap="butt" fill="none"/>
<path d="M7.5,832.5 V841.5 H16.5" fill="none" stroke="#bbbdbf" stroke-width="1" stroke-linecap="butt" stroke-linejoin="miter"/>
<rect x="9.5" y="830.5" width="9" height="9" fill="none" stroke="#bbbdbf" stroke-width="1"/>
<path d="M1037,830.5 V841.5 M1037,838.5 C1041,837.5 1043.5,835.5 1043.6,832" fill="none" stroke="#bbbdbf" stroke-width="1.2" stroke-linecap="butt" stroke-linejoin="miter"/>
<circle cx="1037" cy="830.6" r="1.35" fill="#bbbdbf"/>
<circle cx="1037" cy="841.6" r="1.35" fill="#bbbdbf"/>
<circle cx="1043.7" cy="831.6" r="1.35" fill="#bbbdbf"/>
<circle cx="1103" cy="836" r="7" fill="#aeb0b2"/>
<rect x="1100" y="832.5" width="1.2" height="2.6" fill="#3c3f41" />
<rect x="1104.8" y="832.5" width="1.2" height="2.6" fill="#3c3f41" />
<path d="M1099.4,837.6 Q1103,842.4 1106.6,837.6" fill="none" stroke="#3c3f41" stroke-width="1.1" stroke-linecap="butt" stroke-linejoin="miter"/>
<circle cx="1127" cy="836" r="7" fill="#aeb0b2"/>
<rect x="1124" y="832.5" width="1.2" height="2.6" fill="#3c3f41" />
<rect x="1128.8" y="832.5" width="1.2" height="2.6" fill="#3c3f41" />
<path d="M1123.4,840.4 Q1127,836 1130.6,840.4" fill="none" stroke="#3c3f41" stroke-width="1.1" stroke-linecap="butt" stroke-linejoin="miter"/>
</svg>
</body></html>
